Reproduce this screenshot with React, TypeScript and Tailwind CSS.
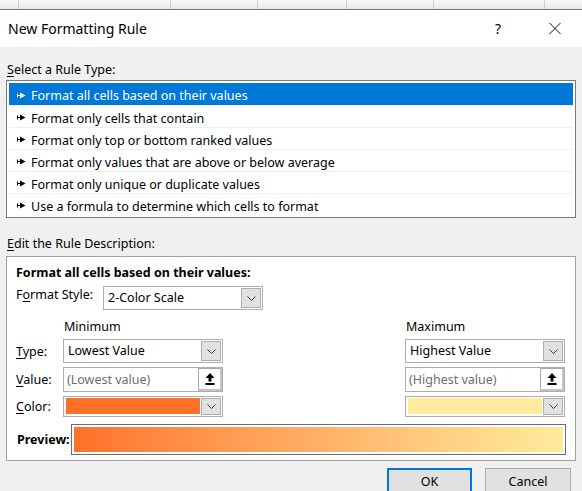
import React from 'react';

const rules = [
  'Format all cells based on their values',
  'Format only cells that contain',
  'Format only top or bottom ranked values',
  'Format only values that are above or below average',
  'Format only unique or duplicate values',
  'Use a formula to determine which cells to format',
];

function Pointer({ light }: { light?: boolean }) {
  const c = light ? '#ffffff' : '#000000';
  return (
    <svg width="9" height="7" viewBox="0 0 9 7" className="mt-[2px] shrink-0">
      <rect x="0" y="1.5" width="1" height="4" fill={c} />
      <rect x="0" y="3" width="4" height="1" fill={c} />
      <polygon points="3,0.5 8.5,3.5 3,6.5" fill={c} />
    </svg>
  );
}

function Chevron() {
  return (
    <svg width="9" height="5" viewBox="0 0 9 5">
      <path d="M0.5 0.5 L4.5 4.5 L8.5 0.5" fill="none" stroke="#3c3c3c" strokeWidth="1" />
    </svg>
  );
}

function DropButton() {
  return (
    <div className="flex h-full w-[20px] shrink-0 items-center justify-center border border-[#adadad] bg-[#e1e1e1]">
      <Chevron />
    </div>
  );
}

function Combo({ text, className }: { text: string; className?: string }) {
  return (
    <div className={`flex w-[160px] items-stretch border border-[#adadad] bg-white p-[1px] ${className ?? ''}`}>
      <div className="flex flex-1 items-center pl-[3px] pt-[1px] text-[12.5px] text-black">{text}</div>
      <DropButton />
    </div>
  );
}

function ColorCombo({ color }: { color: string }) {
  return (
    <div className="flex h-[21px] w-[160px] items-stretch border border-[#adadad] bg-white p-[1px]">
      <div className="flex-1 pb-[1px] pl-[1px] pr-[1px]">
        <div className="h-full w-full" style={{ background: color }} />
      </div>
      <DropButton />
    </div>
  );
}

function ValueBox({ text }: { text: string }) {
  return (
    <div className="flex h-[25px] w-[160px] items-stretch border border-[#adadad] bg-white">
      <div className="flex flex-1 items-center pl-[3px] pt-[1px] text-[12.5px] text-[#6d6d6d]">{text}</div>
      <div className="flex w-[24px] shrink-0 items-center justify-center border-b-2 border-l border-r-2 border-t border-b-[#c4c4c4] border-l-[#a8a8a8] border-r-[#c4c4c4] border-t-[#a8a8a8] bg-white">
        <svg width="10" height="12" viewBox="0 0 10 12">
          <path d="M5 0 L9.5 5 L6.5 5 L6.5 8.5 L3.5 8.5 L3.5 5 L0.5 5 Z" fill="#000" />
          <rect x="0.5" y="10" width="9" height="2" fill="#000" />
        </svg>
      </div>
    </div>
  );
}

function U({ children }: { children: React.ReactNode }) {
  return <span className="underline underline-offset-2">{children}</span>;
}

export default function App() {
  const gridLines = [19, 171, 258, 347, 434, 545];
  return (
    <div
      className="flex h-[491px] w-[582px] flex-col overflow-hidden bg-[#f0f0f0] text-black"
      style={{ fontFamily: '"Noto Sans", "Open Sans", sans-serif' }}
    >
      {/* spreadsheet header strip behind the dialog */}
      <div className="flex h-[9px] shrink-0 bg-gradient-to-b from-[#f9f9f9] to-[#e9e9e9]">
        {gridLines.map((x, i) => (
          <div
            key={x}
            className="h-full border-r border-[#cfcfcf]"
            style={{ width: i === 0 ? x : x - gridLines[i - 1] }}
          />
        ))}
      </div>
      <div className="h-px shrink-0 bg-[#7a7a7a]" />

      {/* title bar */}
      <div className="flex h-[37px] shrink-0 items-center bg-white pl-[8px]">
        <span className="flex-1 text-[14px] leading-none">New Formatting Rule</span>
        <span className="w-[16px] text-center text-[14px] leading-none">?</span>
        <div className="ml-[43px] mr-[21px] flex h-[12px] w-[12px] items-center justify-center">
          <svg width="13" height="13" viewBox="0 0 13 13">
            <path d="M0.5 0.5 L12.5 12.5 M12.5 0.5 L0.5 12.5" stroke="#000" strokeWidth="1" />
          </svg>
        </div>
      </div>

      <div className="flex flex-col px-[6px] pt-[15px] text-[12.5px]">
        <div className="pl-[1px] leading-[16px]">
          <U>S</U>elect a Rule Type:
        </div>

        <div className="mt-[2px] border border-[#7a7a7a] bg-white p-[2px]">
          {rules.map((r, i) => (
            <div
              key={r}
              className={`flex h-[22px] items-center gap-[5px] pl-[8px] ${
                i === 0 ? 'bg-[#0078d7] text-white' : 'border-t border-[#f0f0f0]'
              }`}
            >
              <Pointer light={i === 0} />
              <span className="pt-[5px] leading-none">{r}</span>
            </div>
          ))}
        </div>

        <div className="mt-[18px] pl-[1px] leading-[16px]">
          <U>E</U>dit the Rule Description:
        </div>

        <div className="mt-[4px] flex h-[205px] flex-col border border-[#a0a0a0] bg-white pl-[9px] pt-[8px]">
          <div className="font-bold leading-[16px]">Format all cells based on their values:</div>

          <div className="mt-[5px] flex items-start">
            <div className="mt-[1px] w-[87px] leading-[16px]">
              F<U>o</U>rmat Style:
            </div>
            <Combo text="2-Color Scale" className="h-[24px]" />
          </div>

          <div className="mt-[9px] flex leading-[16px]">
            <div className="w-[48px]" />
            <div className="w-[342px]">Minimum</div>
            <div>Maximum</div>
          </div>

          <div className="mt-[4px] flex items-start">
            <div className="mt-[5px] w-[47px] leading-[16px]">
              <U>T</U>ype:
            </div>
            <Combo text="Lowest Value" className="h-[24px]" />
            <div className="w-[182px]" />
            <Combo text="Highest Value" className="h-[24px]" />
          </div>

          <div className="mt-[4px] flex items-start">
            <div className="mt-[5px] w-[47px] leading-[16px]">
              <U>V</U>alue:
            </div>
            <ValueBox text="(Lowest value)" />
            <div className="w-[182px]" />
            <ValueBox text="(Highest value)" />
          </div>

          <div className="mt-[4px] flex items-start">
            <div className="mt-[3px] w-[47px] leading-[16px]">
              <U>C</U>olor:
            </div>
            <ColorCombo color="#ff7128" />
            <div className="w-[182px]" />
            <ColorCombo color="#ffeb9c" />
          </div>

          <div className="mt-[7px] flex items-center">
            <div className="w-[55px] pl-[1px] font-bold leading-[16px]">Preview:</div>
            <div className="h-[31px] w-[495px] border border-[#6d6d6d] bg-white p-[2px]">
              <div className="h-full w-full bg-gradient-to-r from-[#ff7128] to-[#ffeb9c]" />
            </div>
          </div>
        </div>

        <div className="mt-[7px] flex justify-end gap-[13px] pr-[5px]">
          <div className="flex h-[28px] w-[85px] items-center justify-center border-2 border-[#0078d7] bg-[#e1e1e1]">
            OK
          </div>
          <div className="flex h-[28px] w-[86px] items-center justify-center border border-[#adadad] bg-[#e1e1e1]">
            Cancel
          </div>
        </div>
      </div>
    </div>
  );
}
